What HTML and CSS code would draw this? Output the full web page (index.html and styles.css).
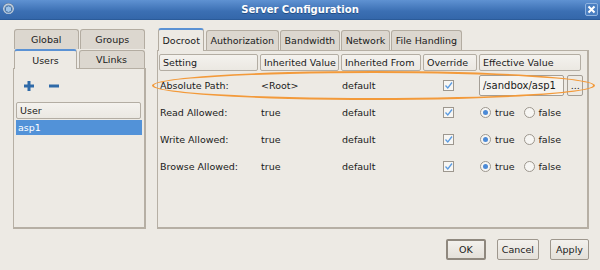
FILE: index.html
```html
<!DOCTYPE html>
<html lang="en">
<head>
    <meta charset="UTF-8">
    <title>Server Configuration</title>
    <link rel="stylesheet" href="styles.css">
</head>
<body>
    <div class="window">
        <div class="titlebar">
            <span class="app-icon"></span>
            <span class="title">Server Configuration</span>
            <span class="close">
                <svg width="9" height="9" viewBox="0 0 9 9"><path d="M1.5 1.5 L7.5 7.5 M7.5 1.5 L1.5 7.5" stroke="#fff" stroke-width="2"/></svg>
            </span>
        </div>

        <div class="content">
            <div class="left">
                <div class="tabrow back">
                    <div class="tab">Global</div>
                    <div class="tab">Groups</div>
                </div>
                <div class="tabrow front">
                    <div class="tab active">Users</div>
                    <div class="tab">VLinks</div>
                </div>
                <div class="panel left-panel">
                    <div class="toolbar">
                        <svg width="12" height="12" viewBox="0 0 12 12"><path d="M6 1 V11 M1 6 H11" stroke="#2f6aa8" stroke-width="3"/></svg>
                        <svg width="12" height="12" viewBox="0 0 12 12"><path d="M1 6 H11" stroke="#2f6aa8" stroke-width="3"/></svg>
                    </div>
                    <div class="colhead user-head">User</div>
                    <div class="list-item selected">asp1</div>
                </div>
            </div>

            <div class="right">
                <div class="tabrow">
                    <div class="tab active">Docroot</div>
                    <div class="tab">Authorization</div>
                    <div class="tab">Bandwidth</div>
                    <div class="tab">Network</div>
                    <div class="tab">File Handling</div>
                </div>
                <div class="panel right-panel">
                    <div class="grid">
                        <div class="colhead">Setting</div>
                        <div class="colhead">Inherited Value</div>
                        <div class="colhead">Inherited From</div>
                        <div class="colhead">Override</div>
                        <div class="colhead">Effective Value</div>

                        <div class="cell">Absolute Path:</div>
                        <div class="cell">&lt;Root&gt;</div>
                        <div class="cell">default</div>
                        <div class="cell center"><span class="check"></span></div>
                        <div class="cell effective">
                            <span class="field">/sandbox/asp1</span>
                            <span class="dots">...</span>
                        </div>

                        <div class="cell">Read Allowed:</div>
                        <div class="cell">true</div>
                        <div class="cell">default</div>
                        <div class="cell center"><span class="check"></span></div>
                        <div class="cell radios">
                            <span class="radio on"></span>true
                            <span class="radio"></span>false
                        </div>

                        <div class="cell">Write Allowed:</div>
                        <div class="cell">true</div>
                        <div class="cell">default</div>
                        <div class="cell center"><span class="check"></span></div>
                        <div class="cell radios">
                            <span class="radio on"></span>true
                            <span class="radio"></span>false
                        </div>

                        <div class="cell">Browse Allowed:</div>
                        <div class="cell">true</div>
                        <div class="cell">default</div>
                        <div class="cell center"><span class="check"></span></div>
                        <div class="cell radios">
                            <span class="radio on"></span>true
                            <span class="radio"></span>false
                        </div>
                    </div>
                    <div class="highlight"></div>
                </div>
            </div>
        </div>

        <div class="buttons">
            <button class="ok">OK</button>
            <button>Cancel</button>
            <button>Apply</button>
        </div>
    </div>
</body>
</html>
```

FILE: styles.css
```css
body {
    margin: 0;
    font-family: "DejaVu Sans", sans-serif;
    font-size: 9.5px;
    color: #1a1a1a;
    background: #edeae4;
}
.window {
    width: 600px;
    height: 270px;
    background: #edeae4;
}
.titlebar {
    height: 20px;
    display: flex;
    align-items: center;
    justify-content: center;
    position: relative;
    background: linear-gradient(#5f92d2, #3b6fb3 60%, #3467aa);
    border-bottom: 1px solid #2b5b99;
    box-sizing: border-box;
}
.title {
    color: #fff;
    font-weight: bold;
    font-size: 10px;
    text-shadow: 0 1px 0 #244d82;
}
.app-icon {
    position: absolute;
    left: 3px;
    top: 3px;
    width: 11px;
    height: 11px;
    border-radius: 50%;
    background: radial-gradient(circle at 50% 55%, #9cc3ea 30%, #3a6aa0 35%, #cfd9e4 60%, #5a6f86 75%);
}
.close {
    position: absolute;
    right: 2px;
    top: 3px;
    width: 13px;
    height: 13px;
    border: 1px solid #8fb3e0;
    border-radius: 2px;
    box-sizing: border-box;
    background: #4a7fc2;
    display: flex;
    align-items: center;
    justify-content: center;
}
.content {
    display: flex;
    gap: 11px;
    padding: 8px 0 0 13px;
}
.left {
    width: 133px;
    display: flex;
    flex-direction: column;
}
.right {
    width: 432px;
    display: flex;
    flex-direction: column;
}
.tabrow {
    display: flex;
    align-items: flex-end;
    height: 22px;
    padding-left: 1px;
}
.tab {
    height: 20px;
    box-sizing: border-box;
    padding: 0 3.5px;
    margin-right: 1.5px;
    display: flex;
    align-items: center;
    justify-content: center;
    border: 1px solid #b3aca1;
    border-bottom: none;
    border-radius: 3px 3px 0 0;
    background: #dcd7cf;
}
.tab.active {
    height: 23px;
    margin-bottom: -1px;
    background: #edeae4;
    border-top: 2px solid #5b92d4;
    position: relative;
    z-index: 1;
}
.left .tabrow .tab {
    flex: 1;
}
.left .tabrow.back {
    height: 21px;
}
.left .tabrow.front {
    height: 19px;
}
.left .tabrow.front .tab {
    height: 18px;
}
.left .tabrow.front .tab.active {
    height: 20px;
    flex: 0 0 63px;
}
.panel {
    border: 1px solid #b6afa4;
    border-right: 2px solid #b6afa4;
    border-bottom: 2px solid #b6afa4;
    position: relative;
    box-sizing: border-box;
}
.left-panel {
    height: 161px;
    padding: 0 2px;
}
.toolbar {
    height: 33px;
    display: flex;
    align-items: center;
    gap: 13px;
    padding-left: 7px;
}
.colhead {
    height: 17px;
    box-sizing: border-box;
    border: 1px solid #b3ada3;
    border-radius: 2px;
    background: linear-gradient(#f4f2ee, #ebe8e2);
    display: flex;
    align-items: center;
    padding-left: 3px;
    margin-right: 2px;
}
.user-head {
    margin: 0 1px 1px 0;
}
.list-item {
    height: 15px;
    padding-left: 2px;
    display: flex;
    align-items: center;
}
.list-item.selected {
    background: #5292d8;
    color: #fff;
}
.right-panel {
    height: 179px;
    padding: 2px 3px 0 1px;
}
.grid {
    display: grid;
    grid-template-columns: 101px 81px 82px 56px 104px;
    grid-template-rows: 17px repeat(4, 27px);
    padding-top: 1px;
}
.grid .colhead {
    margin-bottom: 1px;
}
.cell {
    display: flex;
    align-items: center;
    padding: 1px 0 0 1px;
}
.cell.center {
    justify-content: center;
    padding: 1px 5px 0 0;
}
.check {
    width: 11px;
    height: 11px;
    box-sizing: border-box;
    border: 1px solid #9d978e;
    background: #f7f6f3 url("data:image/svg+xml,%3Csvg xmlns='http://www.w3.org/2000/svg' width='9' height='9'%3E%3Cpath d='M1.5 4.5 L3.8 7 L8 1.5' fill='none' stroke='%235b9be0' stroke-width='1.3'/%3E%3C/svg%3E") center no-repeat;
}
.effective {
    padding-left: 0;
    gap: 3px;
}
.field {
    width: 88px;
    height: 21px;
    box-sizing: border-box;
    border: 1px solid #a49e95;
    border-radius: 2px;
    background: #f5f3ef;
    display: flex;
    align-items: center;
    padding-left: 3px;
    font-size: 10px;
}
.dots {
    width: 16px;
    height: 21px;
    box-sizing: border-box;
    border: 1px solid #a49e95;
    border-radius: 2px;
    display: flex;
    align-items: flex-end;
    justify-content: center;
    padding-bottom: 4px;
}
.radios {
    padding-left: 1px;
}
.radio {
    width: 11px;
    height: 11px;
    box-sizing: border-box;
    border: 1px solid #9d978e;
    border-radius: 50%;
    background: #f7f6f3;
    margin-right: 4px;
    position: relative;
}
.radios .radio:nth-of-type(2) {
    margin-left: 9px;
}
.radio.on::after {
    content: "";
    position: absolute;
    left: 2px;
    top: 2px;
    width: 5px;
    height: 5px;
    border-radius: 50%;
    background: #4c8ad6;
}
.highlight {
    position: absolute;
    left: -6px;
    top: 20px;
    width: 443px;
    height: 29px;
    box-sizing: border-box;
    border: 2px solid #f39a3a;
    border-radius: 50%;
    pointer-events: none;
}
.buttons {
    display: flex;
    justify-content: flex-end;
    gap: 11px;
    padding: 10px 11px 0 0;
}
button {
    font-family: "DejaVu Sans", sans-serif;
    font-size: 9.5px;
    height: 21px;
    min-width: 39px;
    padding: 0 4px;
    border: 1px solid #9e978d;
    border-radius: 2px;
    background: linear-gradient(#f3f1ed, #e4e0d9);
    color: #1a1a1a;
}
button.ok {
    border: 2px solid #8f887e;
    min-width: 40px;
}
```
